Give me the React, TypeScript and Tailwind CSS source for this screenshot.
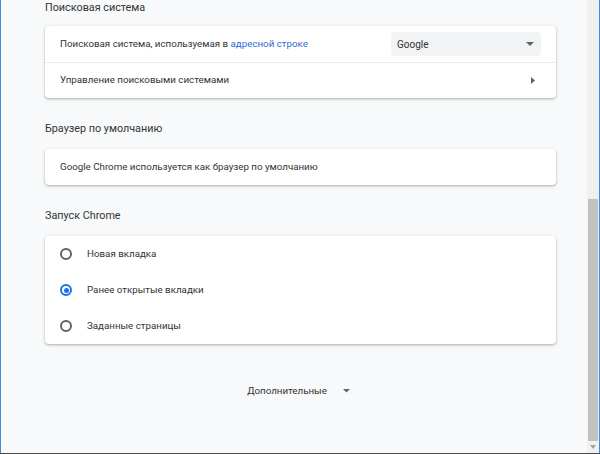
const font = { fontFamily: "Roboto, 'Noto Sans', sans-serif" };

function Caret({ className, w = 8 }: { className?: string; w?: number }) {
  return (
    <svg className={className} width={w} height={w / 2} viewBox="0 0 10 5">
      <path d="M0 0h10L5 5z" fill="currentColor" />
    </svg>
  );
}

function Radio({ checked }: { checked?: boolean }) {
  return (
    <span
      className={
        "flex h-[12px] w-[12px] items-center justify-center rounded-full border-2 " +
        (checked ? "border-[#1a73e8]" : "border-[#5f6368]")
      }
    >
      {checked && <span className="h-[5px] w-[5px] rounded-full bg-[#1a73e8]" />}
    </span>
  );
}

function Card({ children }: { children: React.ReactNode }) {
  return (
    <div className="rounded-[4px] bg-white shadow-[0_1px_2px_rgba(60,64,67,0.3),0_1px_3px_1px_rgba(60,64,67,0.1)]">
      {children}
    </div>
  );
}

export default function App() {
  const startup = [
    { label: "Новая вкладка", checked: false },
    { label: "Ранее открытые вкладки", checked: true },
    { label: "Заданные страницы", checked: false },
  ];

  return (
    <div className="flex h-[454px] w-[600px] flex-col overflow-hidden bg-[#f8f9fa]" style={font}>
      <div className="flex min-h-0 flex-1">
        <div className="w-px bg-[#3c8fdc]" />

        <main className="flex-1 pl-[44px] pr-[31px] text-[#333]">
          <h2 className="mb-[10px] text-[10.8px] leading-4">Поисковая система</h2>
          <Card>
            <div className="flex h-9 items-center justify-between pl-[15px] pr-[15px] text-[9.75px]">
              <span>
                Поисковая система, используемая в{" "}
                <span className="text-[#3367d6]">адресной строке</span>
              </span>
              <div className="flex h-6 w-[150px] items-center justify-between rounded-[4px] bg-[#f1f3f4] pl-[6px] pr-[7px] text-[10px]">
                <span>Google</span>
                <Caret className="text-[#5f6368]" />
              </div>
            </div>
            <div className="flex h-9 items-center justify-between border-t border-[#e8eaed] pl-[15px] pr-[21px] text-[9.75px]">
              <span>Управление поисковыми системами</span>
              <svg width="4" height="7" viewBox="0 0 4 7">
                <path d="M0 0l4 3.5L0 7z" fill="#5f6368" />
              </svg>
            </div>
          </Card>

          <h2 className="mb-3 mt-[23px] text-[10.8px] leading-4">Браузер по умолчанию</h2>
          <Card>
            <div className="flex h-9 items-center pl-[15px] text-[9.75px]">
              Google Chrome используется как браузер по умолчанию
            </div>
          </Card>

          <h2 className="mb-3 mt-[23px] text-[10.8px] leading-4">Запуск Chrome</h2>
          <Card>
            {startup.map((item) => (
              <div key={item.label} className="flex h-9 items-center gap-[15px] pl-[15px] text-[9.75px]">
                <Radio checked={item.checked} />
                <span>{item.label}</span>
              </div>
            ))}
          </Card>

          <div className="mt-[39px] flex items-center justify-center gap-[16px] pr-[4px] text-[9.75px] leading-4">
            <span>Дополнительные</span>
            <Caret className="text-[#5f6368]" w={7} />
          </div>
        </main>

        <div className="flex w-[12px] flex-col bg-[#f0f0f0] px-px">
          <div className="h-[199px]" />
          <div className="flex-1 bg-[#c1c1c1]" />
          <div className="flex h-[12px] items-center justify-center">
            <svg width="6" height="4" viewBox="0 0 6 4">
              <path d="M0 0h6L3 4z" fill="#a3a3a3" />
            </svg>
          </div>
        </div>
        <div className="w-px bg-[#3c8fdc]" />
      </div>
      <div className="h-px bg-[#4a4a4a]" />
    </div>
  );
}
